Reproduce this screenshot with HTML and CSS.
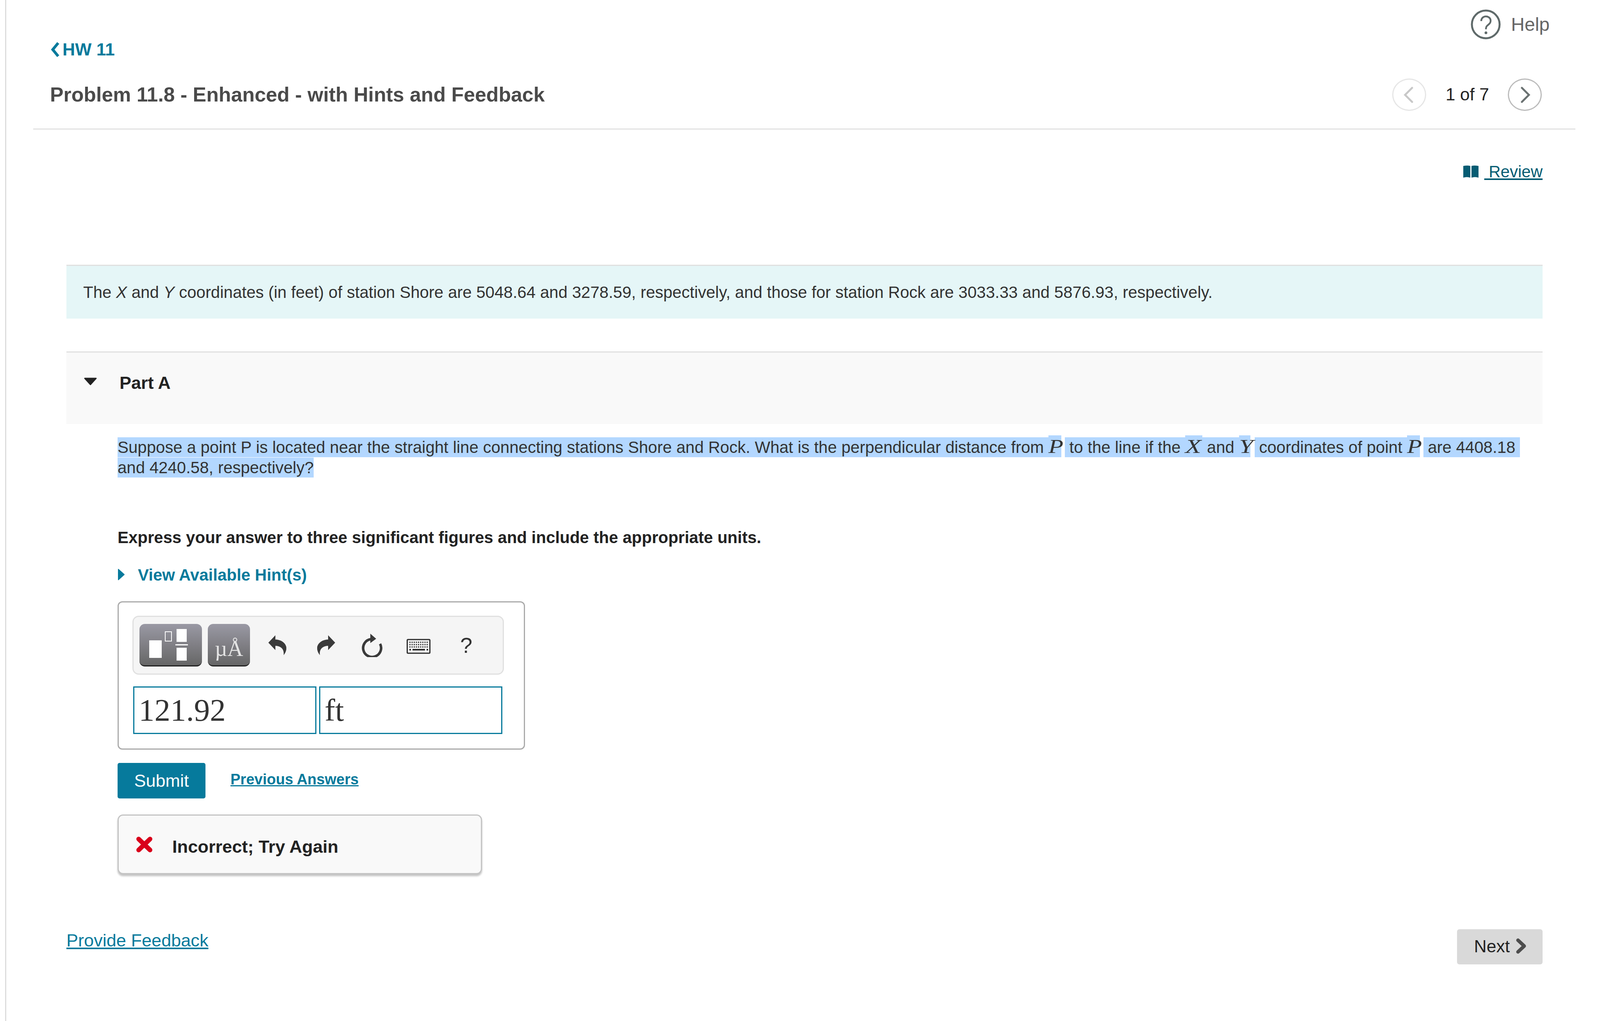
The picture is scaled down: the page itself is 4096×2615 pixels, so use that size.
FILE: index.html
```html
<!DOCTYPE html>
<html lang="en">
<head>
<meta charset="utf-8">
<title>Problem 11.8</title>
<link rel="stylesheet" href="styles.css">
</head>
<body>
<div class="shell">
  <header class="top">
    <div class="help-row">
      <svg class="help-icon" viewBox="0 0 77 77"><circle cx="38.5" cy="38.5" r="35.5" fill="none" stroke="#5f6a6a" stroke-width="5"/><path d="M27 30C27 22 33 18 39 18C46 18 51 23 51 29C51 36 46 38 42 42C40 44 39 46 39 51" fill="none" stroke="#5f6a6a" stroke-width="4.5"/><circle cx="39" cy="60" r="3.5" fill="#5f6a6a"/></svg>
      <span class="help-text">Help</span>
    </div>
    <a class="back"><svg class="back-icon" viewBox="0 0 22 38"><path d="M19 2L5 19L19 36" fill="none" stroke="#067a9c" stroke-width="7"/></svg>HW 11</a>
    <div class="title-row">
      <h1 class="title">Problem 11.8 - Enhanced - with Hints and Feedback</h1>
      <nav class="pager">
        <span class="circle circle-off"><svg class="chev" viewBox="0 0 87 83"><path d="M51 24L33 42L51 60" fill="none" stroke="#c8c8c8" stroke-width="5" stroke-linecap="round"/></svg></span>
        <span class="count">1 of 7</span>
        <span class="circle circle-on"><svg class="chev" viewBox="0 0 87 83"><path d="M36 24L54 42L36 60" fill="none" stroke="#6b7272" stroke-width="5" stroke-linecap="round"/></svg></span>
      </nav>
    </div>
  </header>
  <main class="content">
    <div class="review-row">
      <svg class="book" viewBox="0 0 39 32"><path d="M0 1Q11-1 18 1V31Q9 28 0 31ZM21 1Q28-1 39 1V31Q30 28 21 31Z" fill="#055c73"/></svg>
      <a class="review">&nbsp;Review</a>
    </div>
    <section class="intro">
      <p class="intro-text">The <i class="mi">X</i> and <i class="mi">Y</i> coordinates (in feet) of station Shore are 5048.64 and 3278.59, respectively, and those for station Rock are 3033.33 and 5876.93, respectively.</p>
    </section>
    <section class="part-head">
      <svg class="caret" viewBox="0 0 33 20"><path d="M2 2H31L16.500 18Z" fill="#222" stroke="#222" stroke-width="3" stroke-linejoin="round"/></svg>
      <h2 class="part-title">Part A</h2>
    </section>
    <div class="part-body">
      <p class="question"><span class="sel">Suppose a point P is located near the straight line connecting stations Shore and Rock. What is the perpendicular distance from </span><span class="math m-p"><span class="glyph">P</span></span><span class="sel"> to the line if the </span><span class="math m-x"><span class="glyph">X</span></span><span class="sel"> and </span><span class="math m-y"><span class="glyph">Y</span></span><span class="sel"> coordinates of point </span><span class="math m-p"><span class="glyph">P</span></span><span class="sel"> are 4408.18 </span><br><span class="sel">and 4240.58, respectively?</span></p>
      <p class="express">Express your answer to three significant figures and include the appropriate units.</p>
      <div class="hint"><svg class="hint-caret" viewBox="0 0 19 31"><path d="M2 2L17 15.500L2 29Z" fill="#067a9c" stroke="#067a9c" stroke-width="2" stroke-linejoin="round"/></svg><a class="hint-link">View Available Hint(s)</a></div>
      <div class="answer">
        <div class="toolbar">
          <span class="tool tool-wide"><svg class="tpl" viewBox="0 0 160 109"><rect x="25" y="42" width="32" height="45" fill="#fff"/><rect x="66" y="20" width="16" height="24" fill="none" stroke="#fff" stroke-width="2"/><rect x="95" y="13" width="26" height="33" fill="#fff"/><rect x="92" y="52" width="32" height="3" fill="#fff"/><rect x="95" y="61" width="26" height="33" fill="#fff"/></svg></span>
          <span class="tool tool-unit">µÅ</span>
          <svg class="ico undo" viewBox="0 0 46 51"><path d="M0 19L18 0V11C36 11 48 24 46 36C45 42 43 46 39 51C41 37 34 28 18 27V38Z" fill="#3a3a3a"/></svg>
          <svg class="ico redo" viewBox="0 0 46 51"><path d="M46 19L28 0V11C10 11-2 24 0 36C1 42 3 46 7 51C5 37 12 28 28 27V38Z" fill="#3a3a3a"/></svg>
          <svg class="ico reset" viewBox="0 0 56 60"><path d="M25 14A23 23 0 1 0 49 26" fill="none" stroke="#3a3a3a" stroke-width="6.500"/><path d="M24 0L39 13L24 24Z" fill="#3a3a3a"/></svg>
          <svg class="ico keys" viewBox="0 0 61 39"><rect x="1.500" y="2" width="58" height="35" rx="2" fill="#f5f5f5" stroke="#2a2a2a" stroke-width="3"/><path d="M7 9H55M7 15H55M7 21H55" stroke="#2a2a2a" stroke-width="3" stroke-dasharray="3 2.500"/><rect x="15" y="26" width="32" height="4" fill="#2a2a2a"/><rect x="7" y="26" width="4" height="4" fill="#2a2a2a"/><rect x="51" y="26" width="4" height="4" fill="#2a2a2a"/></svg>
          <span class="tool-help">?</span>
        </div>
        <div class="fields">
          <div class="field">121.92</div>
          <div class="field">ft</div>
        </div>
      </div>
      <div class="actions">
        <a class="submit">Submit</a>
        <a class="prev">Previous Answers</a>
      </div>
      <div class="feedback">
        <svg class="wrong" viewBox="0 0 43 42"><path d="M7 7L36 35M36 7L7 35" stroke="#d9001b" stroke-width="12" stroke-linecap="round"/></svg>
        <span class="feedback-text">Incorrect; Try Again</span>
      </div>
    </div>
    <footer class="foot">
      <a class="provide">Provide Feedback</a>
      <a class="next"><span class="next-label">Next</span><svg class="next-icon" viewBox="0 0 26 40"><path d="M5 5L21 20L5 35" fill="none" stroke="#4d4d4d" stroke-width="9" stroke-linecap="round" stroke-linejoin="round"/></svg></a>
    </footer>
  </main>
</div>
</body>
</html>
```

FILE: styles.css
```css
* { box-sizing: border-box; }
html, body { margin: 0; padding: 0; height: 2615px; overflow: hidden; background: #fff; }
body { font-family: "Liberation Sans", Arial, sans-serif; font-size: 42px; line-height: 50px; color: #333; }
p, h1, h2 { margin: 0; }

.shell { margin-left: 13px; border-left: 3px solid #ddd; height: 2615px; padding-left: 69px; }

.top { width: 3948px; height: 332px; border-bottom: 3px solid #e2e2e2; padding: 24px 66px 0 43px; }
.help-row { display: flex; justify-content: flex-end; align-items: center; gap: 26px; height: 77px; }
.help-icon { width: 77px; height: 77px; }
.help-text { font-size: 48px; color: #666; }
.back { display: flex; align-items: center; gap: 8px; margin-top: 1px; height: 50px; font-size: 44.6px; font-weight: 700; color: #067a9c; }
.back-icon { width: 22px; height: 38px; margin-left: 2px; }
.title-row { display: flex; justify-content: space-between; align-items: center; height: 84px; margin-top: 48px; }
.title { font-size: 51.8px; font-weight: 700; color: #4a4a4a; line-height: 60px; }
.pager { display: flex; align-items: center; margin-right: 20px; }
.circle { display: block; width: 87px; height: 83px; border-radius: 50%; border: 3px solid #e6e6e6; position: relative; }
.circle-on { border-color: #bbb; }
.chev { position: absolute; inset: -3px; width: 87px; height: 83px; }
.count { font-size: 44.5px; color: #222; margin: 0 48px 0 50px; }

.content { width: 3779px; margin-left: 85px; }
.review-row { display: flex; justify-content: flex-end; align-items: center; gap: 15px; height: 50px; margin-top: 83px; }
.book { width: 39px; height: 32px; }
.review { color: #055c73; text-decoration: underline; }

.intro { display: flex; align-items: center; height: 138px; margin-top: 213px; border-top: 3px solid #e0e0e0; background: #e5f6f7; padding-left: 43px; }
.mi { font-style: italic; }

.part-head { display: flex; align-items: flex-start; height: 186px; margin-top: 84px; border-top: 3px solid #e0e0e0; background: #f9f9f9; padding: 53px 0 0 45px; gap: 58px; }
.caret { width: 33px; height: 20px; margin-top: 11px; }
.part-title { font-size: 45px; font-weight: 700; line-height: 50px; color: #222; }

.part-body { padding-left: 131px; }
.question { margin-top: 29px; line-height: 51.7px; white-space: pre; }
.sel { background: #b3d7ff; padding: 2px 0; }
.math { display: inline-block; height: 56px; line-height: 56px; background: #b3d7ff; font-family: "Liberation Serif", serif; font-style: italic; font-size: 50px; }
.glyph { display: inline-block; transform-origin: left center; }
.m-p { width: 33px; margin-right: 9px; }
.m-p .glyph { transform: scaleX(1.25); }
.m-x { width: 44px; }
.m-x .glyph { transform: scaleX(1.35); }
.m-y { width: 29px; margin-right: 11px; }
.m-y .glyph { transform: scaleX(1.3); }

.express { margin-top: 129px; font-weight: 700; color: #222; }
.hint { display: flex; align-items: center; gap: 33px; margin-top: 46px; height: 50px; }
.hint-caret { width: 19px; height: 31px; margin-top: -4px; }
.hint-link { font-weight: 700; color: #067a9c; }

.answer { width: 1043px; height: 380px; margin-top: 42px; border: 3px solid #aaa; border-radius: 12px; padding: 34px 0 0 35px; }
.toolbar { display: flex; align-items: center; width: 951px; height: 151px; border: 3px solid #e0e0e0; border-radius: 16px; background: #f5f5f5; padding-left: 15px; }
.tool { display: block; height: 109px; border-radius: 14px; background: linear-gradient(#9a99a4, #666); border-bottom: 3px solid #222; }
.tool-wide { width: 160px; }
.tpl { display: block; width: 160px; height: 109px; }
.tool-unit { width: 108px; margin-left: 15px; margin-right: 47px; font-family: "Liberation Serif", serif; font-size: 56px; line-height: 127px; color: #e4e4e4; text-align: center; }
.ico { display: block; flex: none; }
.undo { width: 46px; height: 51px; }
.redo { width: 46px; height: 51px; margin-left: 79px; }
.reset { width: 56px; height: 60px; margin-left: 66px; }
.keys { width: 61px; height: 39px; margin-left: 61px; margin-top: 5px; }
.tool-help { font-size: 56px; line-height: 62px; color: #333; margin-left: 76px; }
.fields { display: flex; gap: 7px; margin: 30px 0 0 2px; }
.field { width: 469px; height: 122px; border: 3px solid #067a9c; padding-left: 11px; font-family: "Liberation Serif", serif; font-size: 81px; line-height: 116px; color: #333; }

.actions { display: flex; align-items: flex-start; gap: 64px; margin-top: 34px; }
.submit { display: block; width: 225px; height: 91px; border-radius: 5px; background: #067a9c; color: #fff; font-size: 45px; line-height: 92px; text-align: center; }
.prev { margin-top: 17px; font-size: 38px; font-weight: 700; color: #067a9c; text-decoration: underline; }

.feedback { display: flex; align-items: center; gap: 50px; width: 933px; height: 153px; margin-top: 41px; border: 3px solid #c4c4c4; border-radius: 14px; background: #f9f9f9; box-shadow: 0 5px 4px #c4c4c4; padding-left: 44px; }
.wrong { width: 43px; height: 42px; flex: none; }
.feedback-text { font-weight: 700; font-size: 45.2px; color: #222; padding-top: 12px; }

.foot { display: flex; justify-content: space-between; align-items: flex-start; margin-top: 141px; }
.provide { margin-top: 4px; font-size: 45.1px; color: #067a9c; text-decoration: underline; }
.next { display: flex; align-items: center; gap: 16px; height: 90px; padding: 0 42px 0 44px; border-radius: 6px; background: #d9d9d9; color: #222; font-size: 44.5px; }
.next-label { margin-top: -2px; }
.next-icon { width: 26px; height: 40px; margin-top: -4px; }
```
